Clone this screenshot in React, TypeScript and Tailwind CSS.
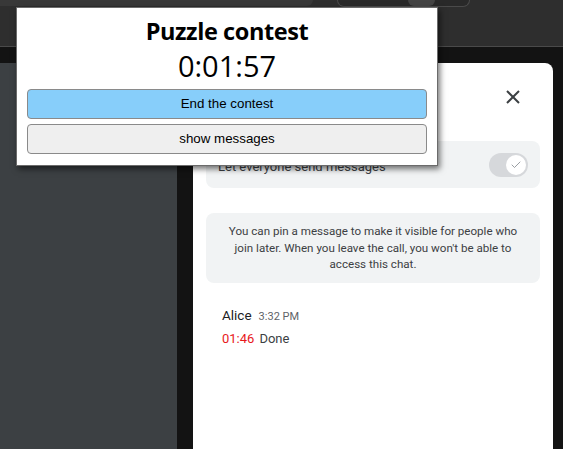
import { Check } from "lucide-react";

const ContestPopup = () => (
  <div className="absolute left-[16px] top-[7px] w-[422px] h-[159px] bg-white border border-[#6b6b6b] shadow-[2px_3px_6px_rgba(0,0,0,0.55)] flex flex-col items-center px-[10px]">
    <div className="mt-[8px] text-[23.5px] leading-[30px] font-bold text-black font-['Open_Sans',sans-serif] tracking-[-0.4px]">
      Puzzle contest
    </div>
    <div className="mt-[3px] text-[29px] leading-[34px] text-black font-['Open_Sans',sans-serif]">
      0:01:57
    </div>
    <div className="mt-[6px] w-full flex flex-col gap-[5px] font-['Liberation_Sans',sans-serif] text-[13.33px] text-black">
      <button className="h-[30px] w-full rounded-[4px] border border-[#8a8a8a] bg-[#87cefa]">
        End the contest
      </button>
      <button className="h-[30px] w-full rounded-[4px] border border-[#8a8a8a] bg-[#efefef]">
        show messages
      </button>
    </div>
  </div>
);

const TopBar = () => (
  <div className="h-[47px] bg-[#2e2e2e] border-b border-[#4a4a4a] flex items-start">
    <div className="w-[313px] h-[6px] bg-[#383838] rounded-br-[8px]" />
    <div className="ml-[24px] w-[133px] h-[7px] border border-t-0 border-[#4a4a4a] bg-[#292929] rounded-b-[10px] flex justify-end pr-[34px]">
      <div className="w-[27px] h-[6px] rounded-b-full bg-[#444]" />
    </div>
  </div>
);

const ChatPanel = () => (
  <div className="w-[360px] bg-white rounded-t-[8px] flex flex-col font-['Roboto',sans-serif]">
    <div className="h-[78px] flex justify-end items-start pt-[27px] pr-[33px]">
      <svg width="14" height="14" viewBox="0 0 14 14" className="text-[#3c4043]">
        <path d="M1 1L13 13M13 1L1 13" stroke="currentColor" strokeWidth="2" />
      </svg>
    </div>
    <div className="mx-[13px] h-[47px] rounded-[8px] bg-[#f1f3f4] flex items-center justify-between pl-[12px] pr-[12px]">
      <span className="text-[13px] text-[#3c4043] mt-[4px]">Let everyone send messages</span>
      <div className="w-[39px] h-[24px] rounded-full bg-[#d6d8db] flex items-center justify-end pr-[2px]">
        <div className="w-[20px] h-[20px] rounded-full bg-white flex items-center justify-center">
          <Check size={12} strokeWidth={1.6} className="text-[#80868b]" />
        </div>
      </div>
    </div>
    <div className="mt-[25px] mx-[13px] h-[70px] rounded-[8px] bg-[#f1f3f4] px-[14px] flex items-center justify-center text-center text-[11.6px] leading-[16.5px] text-[#3c4043]">
      You can pin a message to make it visible for people who join later. When you leave the call, you won't be able to access this chat.
    </div>
    <div className="mt-[22px] px-[29px] flex flex-col gap-[3px]">
      <div className="flex items-baseline gap-[7px]">
        <span className="text-[13.5px] text-[#202124]">Alice</span>
        <span className="text-[11px] text-[#5f6368]">3:32 PM</span>
      </div>
      <div className="flex items-baseline gap-[5px] text-[13px] text-[#3c4043]">
        <span className="text-[#e8181b]">01:46</span>
        <span>Done</span>
      </div>
    </div>
  </div>
);

export default function App() {
  return (
    <div className="relative w-[563px] h-[449px] overflow-hidden bg-[#131313] flex flex-col">
      <TopBar />
      <div className="mt-[16px] flex-1 flex gap-[16px]">
        <div className="w-[177px] bg-[#3c4043]" />
        <ChatPanel />
      </div>
      <ContestPopup />
    </div>
  );
}
